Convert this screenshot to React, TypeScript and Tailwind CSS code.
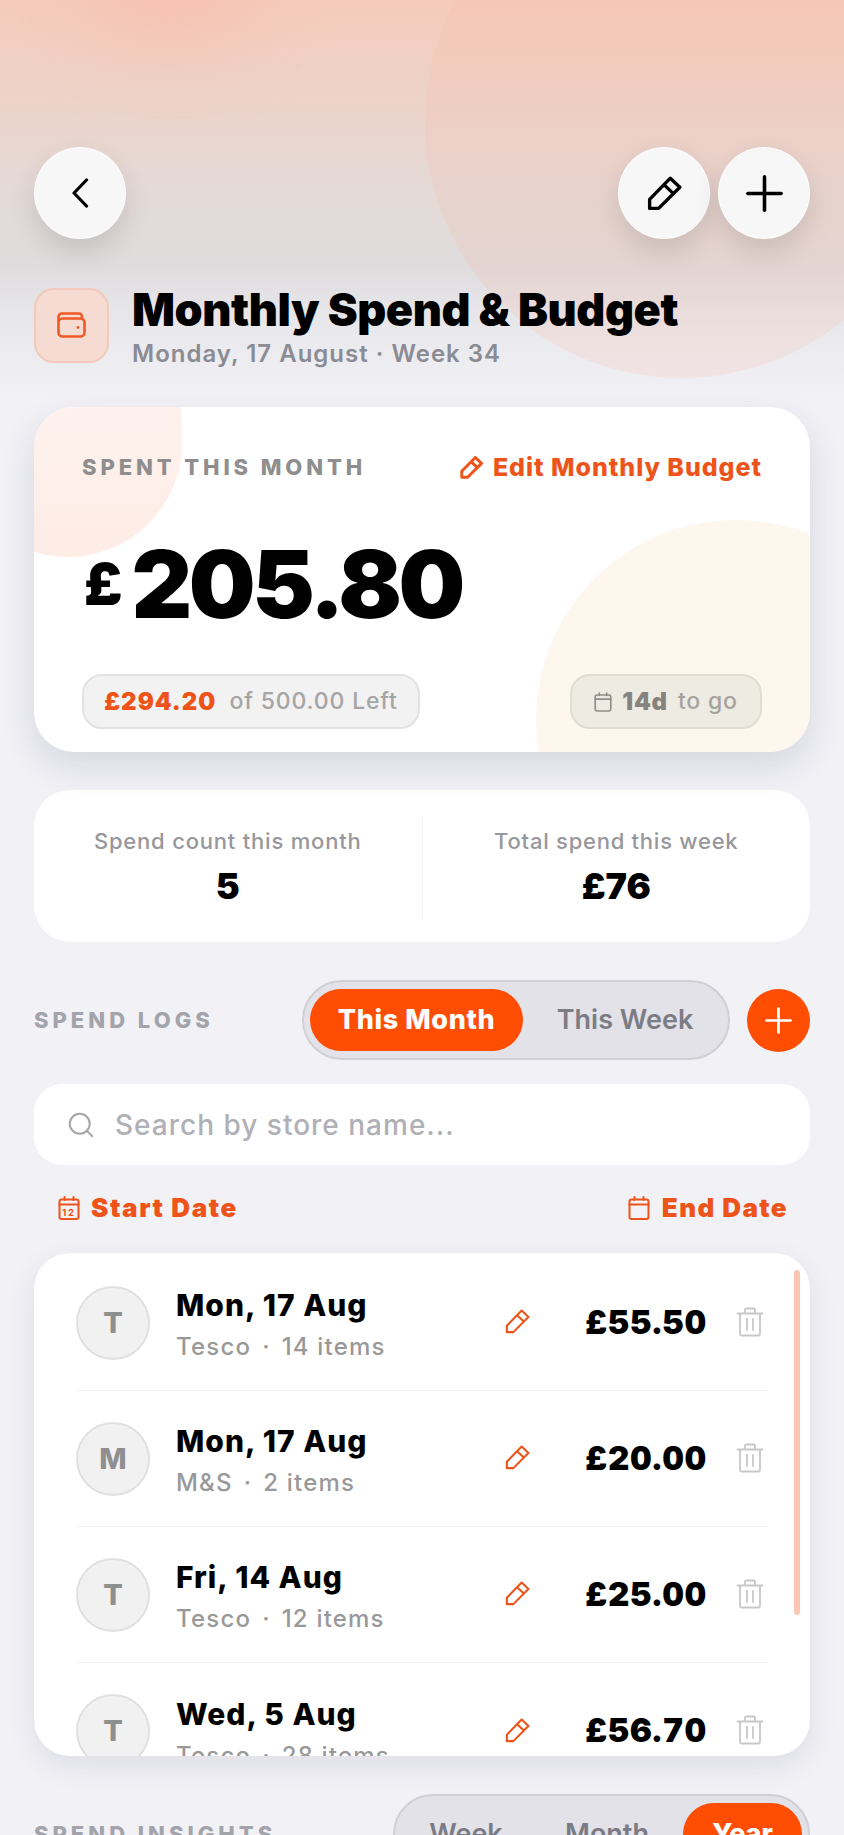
import { Plus, Search } from "lucide-react";

const logs = [
  { letter: "T", date: "Mon, 17 Aug", store: "Tesco", items: "14 items", amount: "£55.50" },
  { letter: "M", date: "Mon, 17 Aug", store: "M&S", items: "2 items", amount: "£20.00" },
  { letter: "T", date: "Fri, 14 Aug", store: "Tesco", items: "12 items", amount: "£25.00" },
  { letter: "T", date: "Wed, 5 Aug", store: "Tesco", items: "28 items", amount: "£56.70" },
];

function RoundButton({ children }: { children: React.ReactNode }) {
  return (
    <button className="flex h-[92px] w-[92px] items-center justify-center rounded-full border border-white/70 bg-[#f8f7f7] text-black shadow-[0_12px_28px_rgba(0,0,0,0.12)]">
      {children}
    </button>
  );
}

// marker style pencil, lucide's one has a different tip
function PencilIcon({ size, stroke = 2.4, className }: { size: number; stroke?: number; className?: string }) {
  return (
    <svg width={size} height={size} viewBox="0 0 24 24" fill="none" stroke="currentColor" strokeWidth={stroke} strokeLinejoin="round" strokeLinecap="round" className={className}>
      <path d="M16 1.5 L22.5 7.7 L8 22.2 H1.8 V16 Z M11.6 5.9 L18.1 12.1" />
    </svg>
  );
}

function TrashIcon() {
  return (
    <svg width="28" height="30" viewBox="0 0 28 30" fill="none" stroke="currentColor" strokeWidth="1.8" strokeLinejoin="round" strokeLinecap="round" className="shrink-0 text-[#c8c8c8]">
      <path d="M1.5 6.5 H26.5 M9 6.5 V3 a1.5 1.5 0 0 1 1.5-1.5 h7 a1.5 1.5 0 0 1 1.5 1.5 V6.5 M4 6.5 V27 a1.5 1.5 0 0 0 1.5 1.5 h17 a1.5 1.5 0 0 0 1.5-1.5 V6.5 M11 12 V23 M17 12 V23" />
    </svg>
  );
}

function CalendarIcon({ w, h, label, className }: { w: number; h: number; label?: string; className?: string }) {
  return (
    <svg width={w} height={h} viewBox="0 0 22 24" fill="none" stroke="currentColor" strokeWidth="2" strokeLinecap="round" className={className}>
      <rect x="1.5" y="3.5" width="19" height="19.5" rx="2" />
      <path d="M1.5 8.5 H20.5 M6.5 1 V4 M15.5 1 V4" />
      {label && (
        <text x="11" y="19.5" textAnchor="middle" fontSize="9.5" fontWeight="700" fill="currentColor" stroke="none" fontFamily="Inter, sans-serif">
          {label}
        </text>
      )}
    </svg>
  );
}

export default function App() {
  return (
    <div className="relative h-[1835px] w-[844px] overflow-hidden bg-[#f1f1f6] font-['Inter',sans-serif]">
      {/* Background glow */}
      <div className="absolute inset-x-0 top-0 h-[400px] bg-[linear-gradient(180deg,#f5cbbb_0px,#edd3c9_100px,#e4dad7_190px,#dfdcdd_265px,#e9e9ed_330px,#f1f1f6_400px)]" />
      <div className="absolute left-[425px] top-[-135px] h-[513px] w-[513px] rounded-full bg-[#f9b9a5]/20" />
      <div className="absolute left-[90px] top-[-60px] h-[100px] w-[160px] rounded-full bg-[#fbb6a4]/50 blur-2xl" />

      <div className="relative flex flex-col px-[34px] pt-[147px]">
        {/* Top buttons */}
        <div className="flex items-center justify-between">
          <RoundButton>
            <svg width="18" height="30" viewBox="0 0 18 30" fill="none" stroke="currentColor" strokeWidth="3.2" strokeLinecap="round" strokeLinejoin="round">
              <path d="M15.5 2 L3 15 L15.5 28" />
            </svg>
          </RoundButton>
          <div className="flex gap-2">
            <RoundButton>
              <PencilIcon size={35} stroke={2.3} />
            </RoundButton>
            <RoundButton>
              <Plus size={57} strokeWidth={1.5} />
            </RoundButton>
          </div>
        </div>

        {/* Title */}
        <div className="mt-[44px] flex h-[84px] items-center gap-[23px]">
          <div className="flex h-[75px] w-[75px] items-center justify-center rounded-[20px] border-2 border-[#f2c9bc] bg-[#f6dbd3]">
            <svg width="29" height="26" viewBox="0 0 29 26" fill="none" stroke="#ee5a26" strokeWidth="2.6" strokeLinecap="round" strokeLinejoin="round">
              <rect x="1.5" y="6.5" width="26" height="18" rx="4" />
              <path d="M1.5 9 V5 a3.5 3.5 0 0 1 3.5-3.5 H22 a3 3 0 0 1 3 3 V6.5" />
              <circle cx="21" cy="15.5" r="1.4" fill="#ee5a26" stroke="none" />
            </svg>
          </div>
          <div className="mt-[4px] flex flex-col">
            <h1 className="text-[45px] font-black leading-[50px] tracking-[-0.01em] text-black">
              Monthly Spend &amp; Budget
            </h1>
            <p className="mt-[4px] text-[24px] font-semibold leading-[30px] tracking-[1px] text-[#8b8b93]">
              Monday, 17 August · Week 34
            </p>
          </div>
        </div>

        {/* Spent card */}
        <div className="relative mt-[40px] h-[345px] overflow-hidden rounded-[40px] bg-white shadow-[0_14px_34px_rgba(60,60,90,0.14)]">
          <div className="absolute left-[-80px] top-[-100px] h-[250px] w-[228px] rounded-full bg-gradient-to-b from-[#fef6f3] to-[#feece6]" />
          <div className="absolute left-[502px] top-[113px] h-[400px] w-[400px] rounded-full bg-[#fef7ee]" />
          <div className="relative flex h-full flex-col px-[48px] pt-[42px]">
            <div className="flex items-center justify-between">
              <span className="text-[22px] font-extrabold tracking-[3.9px] text-[#8e8e8e]">SPENT THIS MONTH</span>
              <span className="flex items-center gap-[10px] text-[25px] font-extrabold tracking-[0.95px] text-[#ee5419]">
                <PencilIcon size={23} stroke={3} />
                Edit Monthly Budget
              </span>
            </div>
            <div className="mt-[42px] flex items-start text-black">
              <span className="ml-[2px] mt-[26px] text-[58px] font-black leading-[58px]">£</span>
              <span className="ml-[9px] text-[94px] font-black leading-[110px] tracking-[-0.036em]">205.80</span>
            </div>
            <div className="mt-auto mb-[23px] flex items-center justify-between">
              <div className="flex h-[55px] w-[338px] items-center justify-center gap-[13px] rounded-[20px] border-2 border-[#e2e2e2] bg-[#f2f2f2] text-[23px]">
                <span className="text-[24px] font-black tracking-[1px] text-[#ee5419]">£294.20</span>
                <span className="font-medium tracking-[0.85px] text-[#a5a5a5]">of 500.00 Left</span>
              </div>
              <div className="flex h-[55px] w-[192px] items-center justify-center gap-[10px] rounded-[20px] border-2 border-[#e0ddd2] bg-[#eeebe3] text-[23px]">
                <CalendarIcon w={18} h={20} className="text-[#8f8d87]" />
                <span className="text-[24px] font-black tracking-[0.8px] text-[#85837e]">14d</span>
                <span className="font-medium tracking-[0.8px] text-[#a5a39e]">to go</span>
              </div>
            </div>
          </div>
        </div>

        {/* Stats */}
        <div className="mt-[38px] flex h-[152px] items-center rounded-[36px] bg-white">
          <div className="-mt-[2px] flex flex-1 flex-col items-center gap-[8px]">
            <span className="text-[22px] font-medium tracking-[0.8px] text-[#97979c]">Spend count this month</span>
            <span className="text-[36px] font-black leading-[40px] text-black">5</span>
          </div>
          <div className="h-[103px] w-px bg-[#f1f1f4]" />
          <div className="-mt-[2px] flex flex-1 flex-col items-center gap-[8px]">
            <span className="text-[22px] font-medium tracking-[0.75px] text-[#97979c]">Total spend this week</span>
            <span className="text-[36px] font-black leading-[40px] text-black">£76</span>
          </div>
        </div>

        {/* Spend logs header */}
        <div className="mt-[38px] flex items-center justify-between">
          <span className="text-[22px] font-extrabold tracking-[4px] text-[#a3a3ab]">SPEND LOGS</span>
          <div className="flex items-center gap-[17px]">
            <div className="flex h-[80px] w-[428px] items-center rounded-full border-2 border-[#cfcfd6] bg-[#e2e2e8] px-[6px]">
              <div className="flex h-[62px] w-[213px] items-center justify-center rounded-full bg-[#ff4d04] text-[27px] font-extrabold tracking-[0.6px] text-white">
                This Month
              </div>
              <div className="flex flex-1 items-center justify-center pl-[5px] text-[27px] font-semibold text-[#7c7c84]">
                This Week
              </div>
            </div>
            <div className="flex h-[63px] w-[63px] items-center justify-center rounded-full bg-[#ff4d04]">
              <Plus size={41} strokeWidth={1.6} className="text-white" />
            </div>
          </div>
        </div>

        {/* Search */}
        <div className="mt-[24px] flex h-[81px] items-center gap-[19px] rounded-[28px] bg-white pl-[32px]">
          <Search size={30} strokeWidth={1.6} className="text-[#a5a5aa]" />
          <span className="text-[28px] font-medium tracking-[1px] text-[#b0b0b6]">Search by store name...</span>
        </div>

        {/* Date filters */}
        <div className="mt-[23px] mb-[1px] flex items-center justify-between pl-[24px] pr-[22px]">
          <span className="flex items-center gap-[11px] text-[26px] font-black tracking-[1.6px] text-[#ee5419]">
            <CalendarIcon w={22} h={24} label="12" />
            Start Date
          </span>
          <span className="flex items-center gap-[12px] text-[26px] font-black tracking-[1.4px] text-[#ee5419]">
            <CalendarIcon w={22} h={24} />
            End Date
          </span>
        </div>

        {/* Logs list */}
        <div className="relative mt-[25px] h-[503px] overflow-hidden rounded-[36px] bg-white shadow-[0_10px_28px_rgba(60,60,90,0.1)]">
          <div className="absolute left-[760px] top-[17px] h-[345px] w-[6px] rounded-full bg-[#fbc7b4]" />
          <div className="flex flex-col pl-[42px] pr-[41px] pt-[2px]">
            {logs.map((log, i) => (
              <div key={i} className={"flex h-[136px] shrink-0 items-center " + (i < 3 ? "border-b border-[#f3f3f5]" : "")}>
                <div className="flex h-[74px] w-[74px] shrink-0 items-center justify-center rounded-full border-2 border-[#e0e0e0] bg-[#f1f1f1] text-[29px] font-extrabold text-[#8f8f8f]">
                  {log.letter}
                </div>
                <div className="ml-[26px] mt-[4px] flex w-[329px] shrink-0 flex-col">
                  <span className="text-[30px] font-extrabold leading-[36px] tracking-[1px] text-black">{log.date}</span>
                  <span className="mt-[9px] text-[24px] font-medium leading-[30px] tracking-[1.2px] text-[#999]">
                    {log.store}
                    <span className="mx-[11px]">·</span>
                    {log.items}
                  </span>
                </div>
                <PencilIcon size={25} stroke={2} className="-mt-[2px] shrink-0 text-[#ee5419]" />
                <span className="-mt-[2px] ml-[47px] w-[130px] shrink-0 text-right text-[33px] font-black tabular-nums leading-[40px] tracking-[1px] text-black">
                  {log.amount}
                </span>
                <div className="-mt-[2px] ml-[29px] shrink-0">
                  <TrashIcon />
                </div>
              </div>
            ))}
          </div>
        </div>

        {/* Spend insights header */}
        <div className="mt-[38px] flex items-center justify-between">
          <span className="text-[22px] font-extrabold tracking-[4px] text-[#a3a3ab]">SPEND INSIGHTS</span>
          <div className="flex h-[80px] w-[417px] items-center rounded-full border-2 border-[#cfcfd6] bg-[#e2e2e8] px-[6px]">
            <div className="flex w-[130px] justify-center text-[27px] font-semibold text-[#7b7b85]">Week</div>
            <div className="flex w-[152px] justify-center text-[27px] font-semibold text-[#7b7b85]">Month</div>
            <div className="flex h-[62px] flex-1 items-center justify-center rounded-full bg-[#ff4d04] text-[27px] font-extrabold text-white">
              Year
            </div>
          </div>
        </div>
      </div>
    </div>
  );
}
